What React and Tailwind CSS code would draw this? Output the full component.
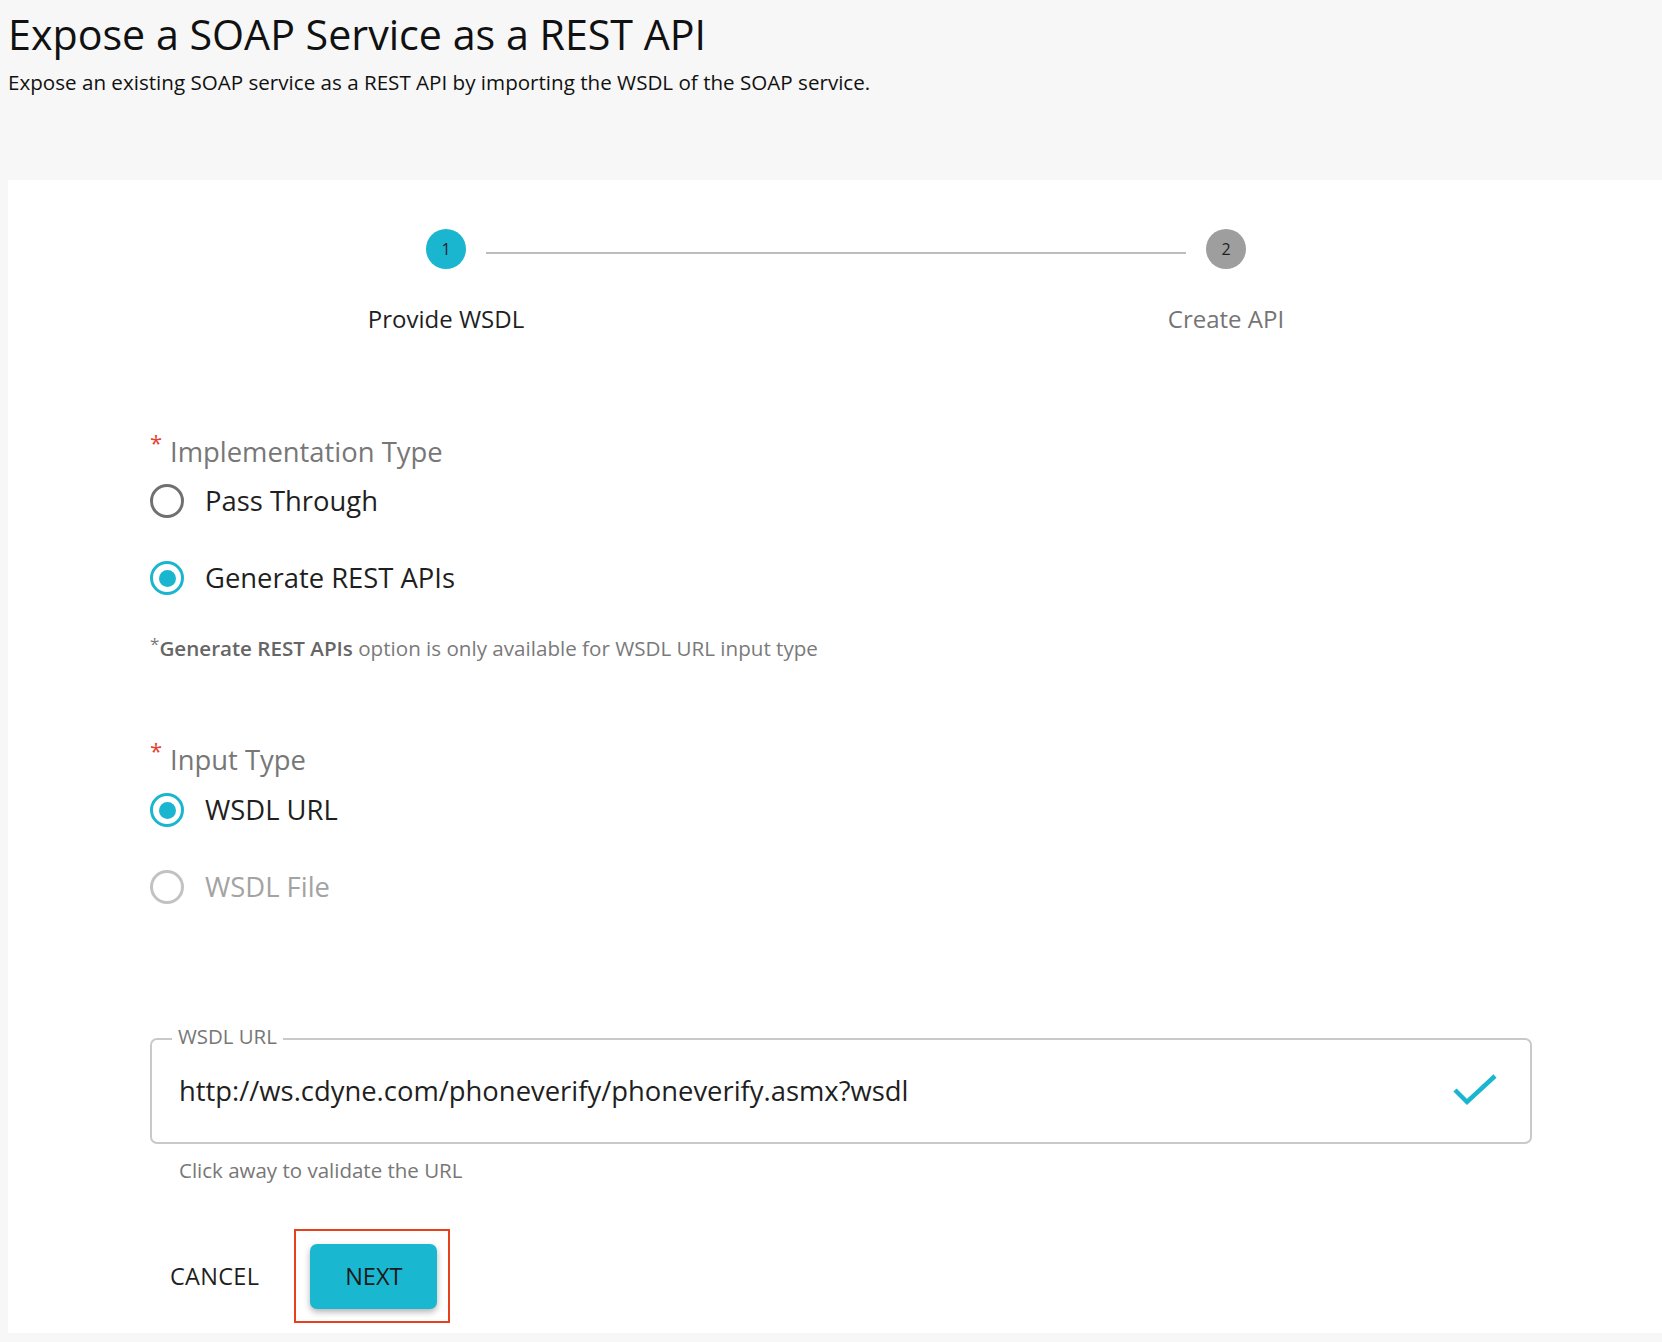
import React from "react";

function Radio({ checked, disabled, label }) {
  const ring = checked
    ? "border-[#1ab6cf]"
    : disabled
    ? "border-[#c2c2c2]"
    : "border-[#707070]";
  const text = disabled ? "text-[#a3a3a3]" : "text-[#1f1f1f]";
  return (
    <div className="flex items-center h-[44px]">
      <span
        className={`flex items-center justify-center w-[34px] h-[34px] rounded-full border-[3.4px] ${ring}`}
      >
        {checked && <span className="w-[17px] h-[17px] rounded-full bg-[#1ab6cf]" />}
      </span>
      <span className={`ml-[21px] text-[27.4px] leading-[36px] ${text}`}>{label}</span>
    </div>
  );
}

function FieldLabel({ children }) {
  return (
    <div className="flex items-start h-[36px]">
      <span className="w-[20px] text-[22px] leading-[22px] text-[#e5412f] mt-[-3px]">*</span>
      <span className="text-[27.4px] leading-[36px] text-[#777777]">{children}</span>
    </div>
  );
}

export default function App() {
  return (
    <div className="w-[1662px] h-[1342px] bg-[#f7f7f7] font-['Open_Sans',sans-serif] overflow-hidden">
      <header className="h-[180px] pt-[10px] pl-[8px]">
        <h1 className="text-[41.2px] leading-[48px] text-[#111111] font-normal">
          Expose a SOAP Service as a REST API
        </h1>
        <p className="mt-[10px] text-[20.6px] leading-[28px] text-[#111111]">
          Expose an existing SOAP service as a REST API by importing the WSDL of the SOAP service.
        </p>
      </header>

      <main className="ml-[8px] bg-white h-[1153px] pt-[49px]">
        {/* Stepper */}
        <div className="flex items-center pl-[418px]">
          <div className="w-[40px] h-[40px] rounded-full bg-[#1ab6cf] flex items-center justify-center text-[16px] text-[#1f1f1f]">
            1
          </div>
          <div className="mx-[20px] mt-[7px] w-[700px] h-[2px] bg-[#bdbdbd]" />
          <div className="w-[40px] h-[40px] rounded-full bg-[#9e9e9e] flex items-center justify-center text-[16px] text-[#1f1f1f]">
            2
          </div>
        </div>
        <div className="mt-[34px] flex pl-[318px] gap-[540px]">
          <div className="w-[240px] text-center text-[24px] leading-[32px] text-[#1f1f1f]">Provide WSDL</div>
          <div className="w-[240px] text-center text-[24px] leading-[32px] text-[#757575]">Create API</div>
        </div>

        {/* Form */}
        <div className="ml-[142px] w-[1382px]">
          <div className="mt-[99px]">
            <FieldLabel>Implementation Type</FieldLabel>
          </div>
          <div className="mt-[9px]">
            <Radio label="Pass Through" />
          </div>
          <div className="mt-[33px]">
            <Radio label="Generate REST APIs" checked />
          </div>
          <p className="mt-[34px] text-[20.6px] leading-[28px] text-[#7a7a7a]">
            <span className="relative top-[-6px] text-[17px]">*</span>
            <span className="font-semibold text-[#666666]">Generate REST APIs</span> option is only
            available for WSDL URL input type
          </p>

          <div className="mt-[78px]">
            <FieldLabel>Input Type</FieldLabel>
          </div>
          <div className="mt-[10px]">
            <Radio label="WSDL URL" checked />
          </div>
          <div className="mt-[33px]">
            <Radio label="WSDL File" disabled />
          </div>

          {/* URL field */}
          <div className="relative mt-[129px] h-[106px] border-2 border-[#c9c9c9] rounded-[7px] flex items-center justify-between pl-[27px] pr-[33px]">
            <span className="absolute left-[20px] top-[-16px] px-[6px] bg-white text-[20.4px] leading-[24px] text-[#777777]">
              WSDL URL
            </span>
            <span className="text-[27.4px] leading-[36px] text-[#1f1f1f]">
              http://ws.cdyne.com/phoneverify/phoneverify.asmx?wsdl
            </span>
            <svg width="44" height="34" viewBox="0 0 44 34" fill="none">
              <polyline points="2,16 14,28 42,2" stroke="#1ab6cf" strokeWidth="4.5" />
            </svg>
          </div>
          <p className="mt-[12px] pl-[29px] text-[20.5px] leading-[28px] text-[#777777]">
            Click away to validate the URL
          </p>

          {/* Actions */}
          <div className="mt-[45px] flex items-center">
            <button className="ml-[20px] text-[23.5px] leading-[32px] text-[#1f1f1f] tracking-[0.3px]">
              CANCEL
            </button>
            <div className="ml-[35px] border-2 border-[#e8401f] pl-[14px] pr-[11px] pt-[13px] pb-[12px]">
              <button className="w-[127px] h-[65px] rounded-[7px] bg-[#1ab8d0] text-[23.5px] text-[#1a1a1a] shadow-[0_3px_6px_rgba(0,0,0,0.3)]">
                NEXT
              </button>
            </div>
          </div>
        </div>
      </main>
    </div>
  );
}
